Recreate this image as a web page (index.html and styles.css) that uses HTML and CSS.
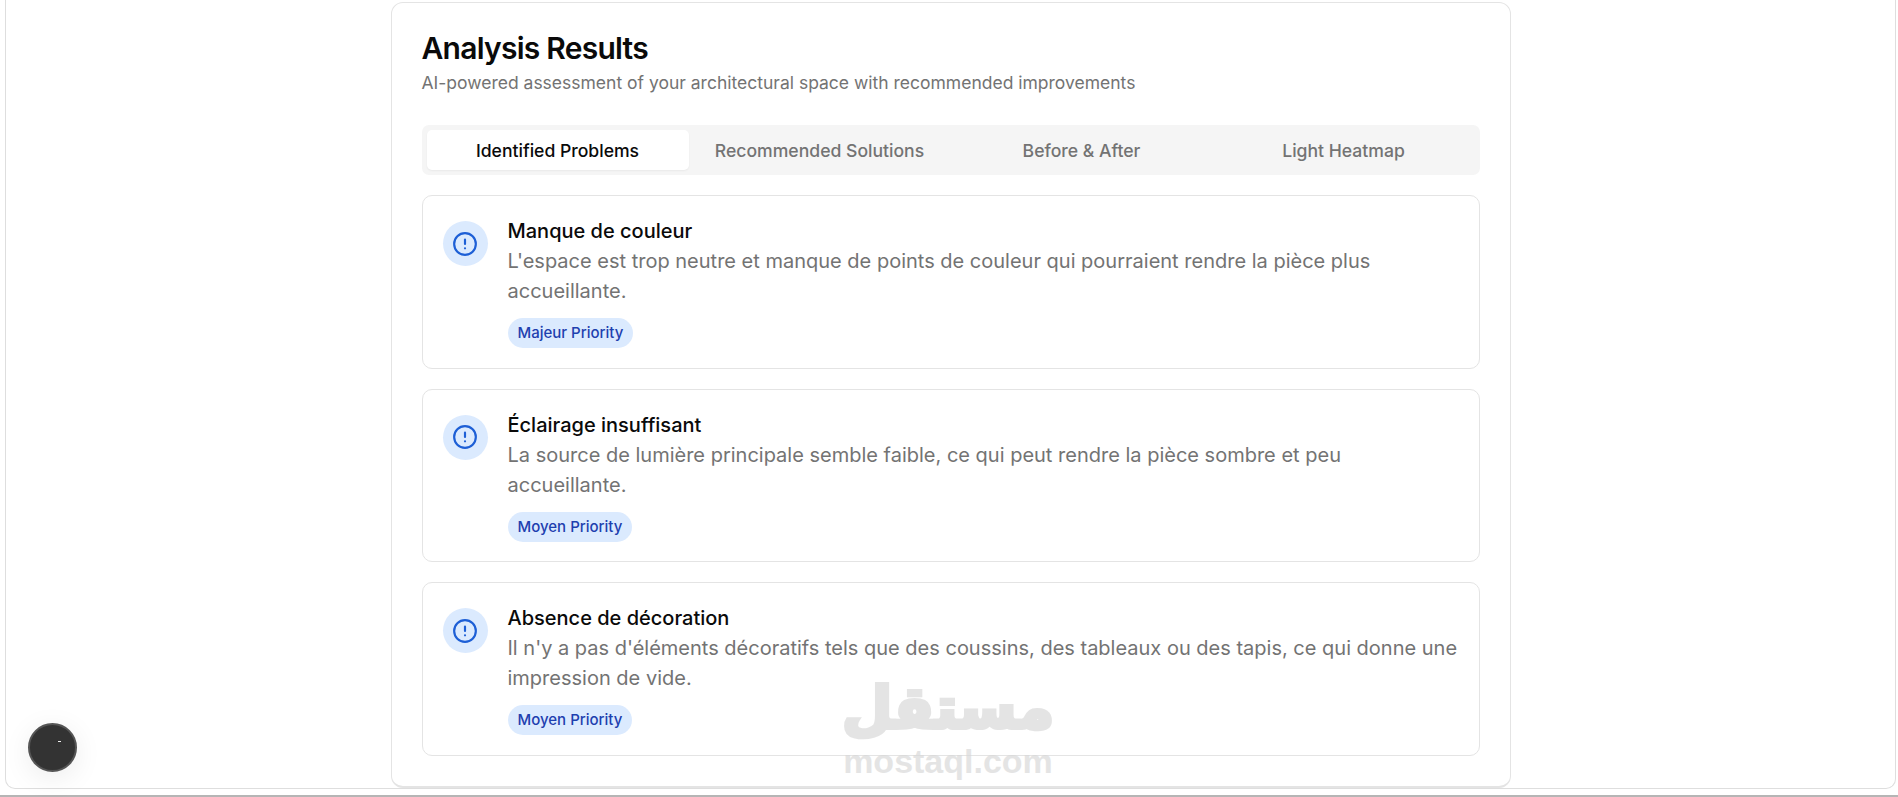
FILE: index.html
```html
<!DOCTYPE html>
<html lang="en">
<head>
    <meta charset="UTF-8">
    <title>Analysis Results</title>
    <link rel="stylesheet" href="styles.css">
</head>
<body>
    <div class="page">
        <div class="frame">
            <div class="results">
                <h1 class="results-title">Analysis Results</h1>
                <p class="results-sub">AI-powered assessment of your architectural space with recommended improvements</p>

                <div class="tabs">
                    <div class="tab active">Identified Problems</div>
                    <div class="tab">Recommended Solutions</div>
                    <div class="tab">Before &amp; After</div>
                    <div class="tab">Light Heatmap</div>
                </div>

                <div class="problem-list">
                    <div class="problem">
                        <div class="problem-icon">
                            <svg width="26" height="26" viewBox="0 0 24 24" fill="none" stroke="#1d5fd6" stroke-width="2" stroke-linecap="round"><circle cx="12" cy="12" r="10"/><path d="M12 8v4"/><path d="M12 16h.01"/></svg>
                        </div>
                        <div class="problem-body">
                            <h3 class="problem-title">Manque de couleur</h3>
                            <p class="problem-text">L'espace est trop neutre et manque de points de couleur qui pourraient rendre la pièce plus accueillante.</p>
                            <span class="tag">Majeur Priority</span>
                        </div>
                    </div>
                    <div class="problem">
                        <div class="problem-icon">
                            <svg width="26" height="26" viewBox="0 0 24 24" fill="none" stroke="#1d5fd6" stroke-width="2" stroke-linecap="round"><circle cx="12" cy="12" r="10"/><path d="M12 8v4"/><path d="M12 16h.01"/></svg>
                        </div>
                        <div class="problem-body">
                            <h3 class="problem-title">Éclairage insuffisant</h3>
                            <p class="problem-text">La source de lumière principale semble faible, ce qui peut rendre la pièce sombre et peu accueillante.</p>
                            <span class="tag">Moyen Priority</span>
                        </div>
                    </div>
                    <div class="problem">
                        <div class="problem-icon">
                            <svg width="26" height="26" viewBox="0 0 24 24" fill="none" stroke="#1d5fd6" stroke-width="2" stroke-linecap="round"><circle cx="12" cy="12" r="10"/><path d="M12 8v4"/><path d="M12 16h.01"/></svg>
                        </div>
                        <div class="problem-body">
                            <h3 class="problem-title">Absence de décoration</h3>
                            <p class="problem-text">Il n'y a pas d'éléments décoratifs tels que des coussins, des tableaux ou des tapis, ce qui donne une impression de vide.</p>
                            <span class="tag">Moyen Priority</span>
                        </div>
                    </div>
                </div>
            </div>
        </div>

        <div class="float-btn"><span class="float-dot"></span></div>

        <div class="watermark">
            <div class="watermark-ar" lang="ar" dir="rtl">مستقل</div>
            <div class="watermark-en">mostaql.com</div>
        </div>
    </div>
</body>
</html>
```

FILE: styles.css
```css
html, body {
    margin: 0;
    padding: 0;
    height: 100%;
    overflow: hidden;
    background-color: #fff;
    font-family: Inter, "Liberation Sans", sans-serif;
}

.page {
    position: relative;
    height: 797px;
    box-sizing: border-box;
    padding: 0 2px 0 5px;
    border-bottom: 2px solid #b5b5b5;
}

.frame {
    height: 789px;
    box-sizing: border-box;
    padding-top: 2px;
    background-color: #fff;
    border: 1px solid #dedede;
    border-top: 0;
    border-radius: 0 0 10px 10px;
}

.results {
    width: 1120px;
    height: 786px;
    box-sizing: border-box;
    margin: 0 auto;
    padding: 27px 30px 0;
    border: 1px solid #e4e4e4;
    border-bottom-width: 2px;
    border-radius: 12px;
}

.results-title {
    margin: 0;
    font-size: 30px;
    line-height: 36px;
    font-weight: 600;
    letter-spacing: -0.75px;
    color: #0a0a0a;
}

.results-sub {
    margin: 5px 0 0;
    font-size: 17.5px;
    line-height: 24px;
    color: #737373;
}

.tabs {
    display: grid;
    grid-template-columns: repeat(4, 1fr);
    height: 50px;
    box-sizing: border-box;
    margin-top: 30px;
    padding: 5px;
    background-color: #f5f5f5;
    border-radius: 7px;
}

.tab {
    display: flex;
    align-items: center;
    justify-content: center;
    border-radius: 5px;
    font-size: 17.6px;
    font-weight: 500;
    color: #737373;
}

.tab.active {
    background-color: #fff;
    color: #0a0a0a;
    box-shadow: 0 1px 2px rgba(0, 0, 0, 0.05);
}

.problem-list {
    display: flex;
    flex-direction: column;
    gap: 20px;
    margin-top: 20px;
}

.problem {
    display: flex;
    gap: 20px;
    height: 173.6px;
    box-sizing: border-box;
    padding: 20px;
    border: 1px solid #e4e4e4;
    border-radius: 10px;
}

.problem-icon {
    flex: none;
    display: flex;
    align-items: center;
    justify-content: center;
    width: 45px;
    height: 45px;
    margin-top: 5px;
    border-radius: 50%;
    background-color: #dbeafe;
}

.problem-title {
    margin: 1px 0 1px;
    font-size: 20px;
    line-height: 28px;
    font-weight: 500;
    color: #0a0a0a;
}

.problem-text {
    margin: 0;
    font-size: 20px;
    line-height: 30px;
    color: #737373;
}

.tag {
    display: inline-block;
    margin-top: 12px;
    padding: 0 10px;
    font-size: 15px;
    line-height: 30px;
    font-weight: 500;
    color: #1e40af;
    background-color: #dbeafe;
    border-radius: 15px;
}

.float-btn {
    position: absolute;
    left: 28px;
    top: 723px;
    width: 49px;
    height: 49px;
    box-sizing: border-box;
    background-color: #333;
    border: 2px solid #555;
    border-radius: 50%;
    box-shadow: 0 6px 28px rgba(0, 0, 0, 0.08);
}

.float-dot {
    position: absolute;
    left: 28px;
    top: 16px;
    width: 3px;
    height: 1px;
    background-color: #eee;
}

.watermark {
    position: absolute;
    left: 838px;
    top: 673px;
    width: 220px;
    text-align: center;
    color: #d7d7d7;
    opacity: 0.65;
    font-weight: 700;
}

.watermark-ar {
    font-family: "DejaVu Sans", sans-serif;
    font-size: 58px;
    line-height: 70px;
    -webkit-text-stroke: 4px #d7d7d7;
}

.watermark-en {
    font-family: "Liberation Sans", sans-serif;
    font-size: 34px;
    line-height: 36px;
}
```
